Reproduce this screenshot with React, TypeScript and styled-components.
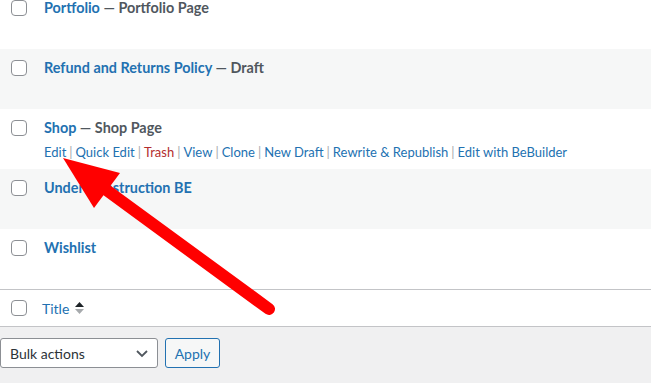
import React from 'react';
import styled, { createGlobalStyle } from 'styled-components';

const GlobalStyle = createGlobalStyle`
  html, body {
    margin: 0;
    padding: 0;
    background: #f0f0f1;
    font-family: Lato, "Noto Sans", sans-serif;
    overflow: hidden;
  }
`;

const Page = styled.div`
  position: relative;
  width: 651px;
  height: 383px;
  overflow: hidden;
`;

const Table = styled.div`
  margin-top: -11px;
  background: #fff;
  border-bottom: 1px solid #c3c4c7;
`;

const Row = styled.div<{ $alt?: boolean }>`
  display: flex;
  height: 60px;
  background: ${(p) => (p.$alt ? '#f6f7f7' : '#fff')};
  box-sizing: border-box;
`;

const CheckCell = styled.div`
  width: 38px;
  padding: 11px 0 0 11px;
  box-sizing: border-box;
  flex-shrink: 0;
`;

const Checkbox = styled.span`
  display: block;
  width: 16px;
  height: 16px;
  box-sizing: border-box;
  border: 1px solid #8c8f94;
  border-radius: 4px;
  background: #fff;
`;

const TitleCell = styled.div`
  padding: 8px 0 0 6px;
`;

const TitleLine = styled.div`
  font-size: 14.4px;
  font-weight: 700;
  line-height: 22px;
  color: #50575e;
  white-space: nowrap;
`;

const TitleLink = styled.a`
  color: #2271b1;
  text-decoration: none;
`;

const Actions = styled.div`
  font-size: 13px;
  line-height: 20px;
  padding-top: 3px;
  color: #a7aaad;
  white-space: nowrap;
`;

const ActionLink = styled.a<{ $danger?: boolean }>`
  color: ${(p) => (p.$danger ? '#b32d2e' : '#2271b1')};
  text-decoration: none;
`;

const Sep = styled.span`
  margin: 0 3px;
  color: #a7aaad;
`;

const FootRow = styled.div`
  display: flex;
  align-items: center;
  height: 36px;
  border-top: 1px solid #c3c4c7;
  background: #fff;
`;

const FootCheck = styled.div`
  padding-left: 11px;
  width: 42px;
  box-sizing: border-box;
`;

const SortTitle = styled.a`
  display: flex;
  align-items: center;
  font-size: 14px;
  color: #2271b1;
  text-decoration: none;
`;

const SortArrows = styled.span`
  display: inline-flex;
  flex-direction: column;
  gap: 2px;
  margin-left: 6px;
`;

const BulkBar = styled.div`
  display: flex;
  gap: 7px;
  padding-top: 11px;
`;

const Select = styled.div`
  width: 158px;
  height: 30px;
  box-sizing: border-box;
  border: 1px solid #8c8f94;
  border-radius: 3px;
  background: #fff;
  display: flex;
  align-items: center;
  justify-content: space-between;
  padding: 0 8px 0 9px;
  font-size: 14px;
  color: #2c3338;
`;

const Button = styled.button`
  height: 30px;
  width: 55px;
  padding: 0;
  border: 1px solid #2271b1;
  border-radius: 3px;
  background: #f6f7f7;
  color: #2271b1;
  font-family: inherit;
  font-size: 14px;
`;

const Arrow = styled.svg`
  position: absolute;
  left: 0;
  top: 0;
  pointer-events: none;
`;

const actions = [
  'Edit',
  'Quick Edit',
  'Trash',
  'View',
  'Clone',
  'New Draft',
  'Rewrite & Republish',
  'Edit with BeBuilder',
];

const rows = [
  { title: 'Portfolio', state: 'Portfolio Page' },
  { title: 'Refund and Returns Policy', state: 'Draft' },
  { title: 'Shop', state: 'Shop Page', actions: true },
  { title: 'Under Construction BE' },
  { title: 'Wishlist' },
];

export default function App(): JSX.Element {
  return (
    <Page>
      <GlobalStyle />
      <Table>
        {rows.map((r, i) => (
          <Row key={r.title} $alt={i % 2 === 1}>
            <CheckCell>
              <Checkbox />
            </CheckCell>
            <TitleCell>
              <TitleLine>
                <TitleLink href="#">{r.title}</TitleLink>
                {r.state && <span> — {r.state}</span>}
              </TitleLine>
              {r.actions && (
                <Actions>
                  {actions.map((a, j) => (
                    <React.Fragment key={a}>
                      {j > 0 && <Sep>|</Sep>}
                      <ActionLink href="#" $danger={a === 'Trash'}>
                        {a}
                      </ActionLink>
                    </React.Fragment>
                  ))}
                </Actions>
              )}
            </TitleCell>
          </Row>
        ))}
        <FootRow>
          <FootCheck>
            <Checkbox />
          </FootCheck>
          <SortTitle href="#">
            Title
            <SortArrows>
              <svg width="9" height="5" viewBox="0 0 9 5">
                <path d="M4.5 0L9 5H0z" fill="#1d2327" />
              </svg>
              <svg width="9" height="5" viewBox="0 0 9 5">
                <path d="M0 0h9L4.5 5z" fill="#a7aaad" />
              </svg>
            </SortArrows>
          </SortTitle>
        </FootRow>
      </Table>
      <BulkBar>
        <Select>
          <span>Bulk actions</span>
          <svg width="14" height="14" viewBox="0 0 14 14">
            <path d="M2 5l5 5 5-5" stroke="#50575e" strokeWidth="1.8" fill="none" />
          </svg>
        </Select>
        <Button type="button">Apply</Button>
      </BulkBar>
      <Arrow width="651" height="383" viewBox="0 0 651 383">
        <line
          x1="105"
          y1="189"
          x2="269"
          y2="309"
          stroke="#ff0000"
          strokeWidth="12"
          strokeLinecap="round"
        />
        <path d="M63 158L94 208L120 173z" fill="#ff0000" />
      </Arrow>
    </Page>
  );
}
